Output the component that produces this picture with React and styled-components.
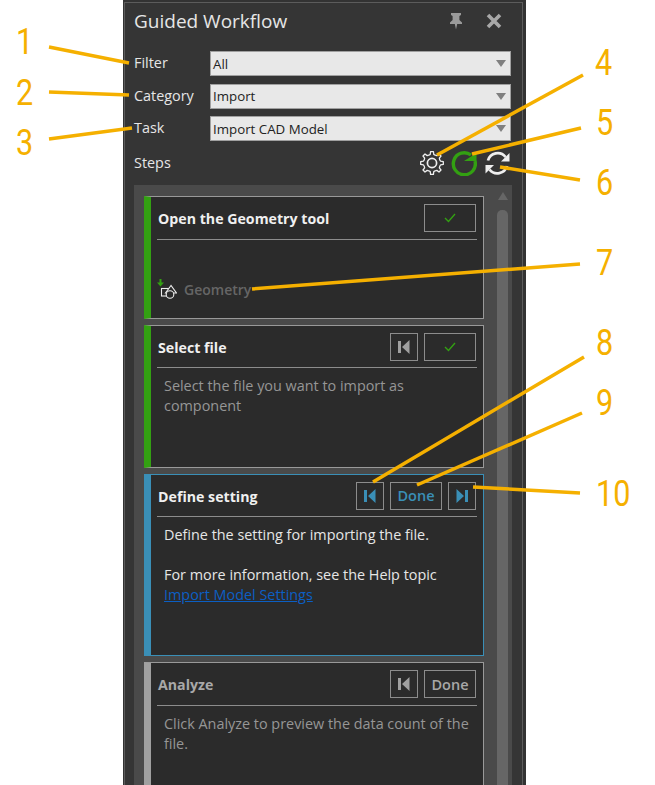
import React from "react"
import styled, { createGlobalStyle } from "styled-components"

const GlobalStyle = createGlobalStyle`
  html, body {
    margin: 0;
    padding: 0;
    background: #fff;
  }
  body {
    font-family: "Open Sans", "Noto Sans", sans-serif;
  }
`

const ORANGE = "#f5b000"
const GREEN = "#33a012"
const BLUE = "#3a8fb7"

const callouts = [
  { n: "1", x: 16, y: 21 },
  { n: "2", x: 16, y: 72 },
  { n: "3", x: 16, y: 122 },
  { n: "4", x: 595, y: 42 },
  { n: "5", x: 596, y: 102 },
  { n: "6", x: 596, y: 162 },
  { n: "7", x: 596, y: 242 },
  { n: "8", x: 596, y: 322 },
  { n: "9", x: 596, y: 382 },
  { n: "10", x: 596, y: 473 },
]

const leaders = [
  [49, 47, 129, 63],
  [49, 92, 129, 95],
  [49, 139, 132, 128],
  [583, 75, 437, 155],
  [581, 128, 472, 154],
  [580, 180, 500, 167],
  [580, 264, 252, 289],
  [584, 357, 373, 482],
  [582, 413, 417, 485],
  [580, 493, 473, 487],
]

const PinIcon = () => (
  <svg width="16" height="18" viewBox="0 0 16 18">
    <path d="M3 1h10v2l-1.6 1v4l2.6 2.6V12H9.2L8 17.500 6.800 12H2v-1.400L4.600 8V4L3 3z" fill="#9a9a9a" />
  </svg>
)

const CloseIcon = () => (
  <svg width="16" height="16" viewBox="0 0 16 16">
    <path d="M2 2l12 12M14 2L2 14" stroke="#a8a8a8" strokeWidth="3.600" />
  </svg>
)

const gearPath = () => {
  const teeth = 8
  const cx = 12
  const cy = 12
  const pts = []
  for (let i = 0; i < teeth; i++) {
    const a = (i / teeth) * Math.PI * 2
    const step = (Math.PI * 2) / teeth
    const p = (r, o) => {
      const x = cx + r * Math.cos(a + o * step)
      const y = cy + r * Math.sin(a + o * step)
      return `${x.toFixed(2)} ${y.toFixed(2)}`
    }
    pts.push(p(8.4, -0.5), p(8.8, -0.26), p(11.4, -0.16), p(11.4, 0.16), p(8.8, 0.26))
  }
  return "M" + pts.join("L") + "Z"
}

const GearIcon = () => (
  <svg width="24" height="24" viewBox="0 0 24 24" fill="none" stroke="#eee" strokeWidth="1.300">
    <path d={gearPath()} strokeLinejoin="round" />
    <circle cx="12" cy="12" r="4.600" strokeWidth="1.700" />
  </svg>
)

const RunIcon = () => (
  <svg width="26" height="26" viewBox="0 0 26 26" fill="none">
    <path d="M20 5A11 11 0 1 0 24 11" stroke={GREEN} strokeWidth="3.400" />
    <path d="M13 11H25.500V3z" fill={GREEN} />
  </svg>
)

const SyncIcon = () => (
  <svg width="27" height="26" viewBox="0 0 27 26" fill="none">
    <path d="M4 10.500A10 10 0 0 1 21.500 7" stroke="#eee" strokeWidth="2.800" />
    <path d="M23 16A10 10 0 0 1 5.500 19.500" stroke="#eee" strokeWidth="2.800" />
    <path d="M25.500 3v8.500H17z" fill="#eee" />
    <path d="M1.500 23.500V15H10z" fill="#eee" />
  </svg>
)

const GeometryIcon = () => (
  <svg width="20" height="20" viewBox="0 0 20 20" fill="none">
    <path d="M2.500 0h2v3.500H7L3.500 7.500 0 3.500h2.500z" fill={GREEN} />
    <rect x="4.500" y="9.500" width="8" height="7.500" stroke="#eee" strokeWidth="1.100" />
    <path d="M14 6.500l-5.500 7.500h11z" fill="#2b2b2b" stroke="#eee" strokeWidth="1.100" />
    <circle cx="13" cy="15.500" r="3.800" fill="#2b2b2b" stroke="#eee" strokeWidth="1.100" />
  </svg>
)

const CheckIcon = () => (
  <svg width="12" height="10" viewBox="0 0 12 10" fill="none">
    <path d="M1 5l3.500 3.500L11 1" stroke={GREEN} strokeWidth="1.400" />
  </svg>
)

const PrevIcon = ({ color }) => (
  <svg width="14" height="14" viewBox="0 0 14 14">
    <path d="M1 1h3v12H1zM12.500 0v14L5 7z" fill={color} />
  </svg>
)

const NextIcon = ({ color }) => (
  <svg width="14" height="14" viewBox="0 0 14 14">
    <path d="M10 1h3v12h-3zM1.500 0v14L9 7z" fill={color} />
  </svg>
)

const Row = ({ label, value }) => (
  <FieldRow>
    <FieldLabel>{label}</FieldLabel>
    <Combo>
      {value}
      <Caret />
    </Combo>
  </FieldRow>
)

export default function App() {
  return (
    <Page>
      <GlobalStyle />
      <Panel>
        <Inner>
          <TitleBar>
            <Title>Guided Workflow</Title>
            <TitleIcons>
              <PinIcon />
              <CloseIcon />
            </TitleIcons>
          </TitleBar>
          <Fields>
            <Row label="Filter" value="All" />
            <Row label="Category" value="Import" />
            <Row label="Task" value="Import CAD Model" />
          </Fields>
          <StepsBar>
            <FieldLabel>Steps</FieldLabel>
            <StepsIcons>
              <GearIcon />
              <RunIcon />
              <SyncIcon />
            </StepsIcons>
          </StepsBar>
          <List>
            <Cards>
              <Card $accent={GREEN} $edge="#999" $height={123}>
                <CardBody>
                  <CardHead $height={43}>
                    <CardTitle>Open the Geometry tool</CardTitle>
                    <Buttons>
                      <WideButton><CheckIcon /></WideButton>
                    </Buttons>
                  </CardHead>
                  <ToolRow>
                    <GeometryIcon />
                    <ToolName>Geometry</ToolName>
                  </ToolRow>
                </CardBody>
              </Card>

              <Card $accent={GREEN} $edge="#999" $height={143}>
                <CardBody>
                  <CardHead $height={42}>
                    <CardTitle>Select file</CardTitle>
                    <Buttons>
                      <SquareButton><PrevIcon color="#a0a0a0" /></SquareButton>
                      <WideButton><CheckIcon /></WideButton>
                    </Buttons>
                  </CardHead>
                  <CardText $dim>Select the file you want to import as component</CardText>
                </CardBody>
              </Card>

              <Card $accent={BLUE} $edge={BLUE} $height={182}>
                <CardBody>
                  <CardHead $height={42}>
                    <CardTitle>Define setting</CardTitle>
                    <Buttons>
                      <SquareButton><PrevIcon color={BLUE} /></SquareButton>
                      <WideButton $color={BLUE}>Done</WideButton>
                      <SquareButton><NextIcon color={BLUE} /></SquareButton>
                    </Buttons>
                  </CardHead>
                  <CardText>
                    Define the setting for importing the file.
                    <br />
                    <br />
                    For more information, see the Help topic
                    <br />
                    <HelpLink href="#">Import Model Settings</HelpLink>
                  </CardText>
                </CardBody>
              </Card>

              <Card $accent="#a0a0a0" $edge="#999" $height={183}>
                <CardBody>
                  <CardHead $height={43}>
                    <CardTitle $dim>Analyze</CardTitle>
                    <Buttons>
                      <SquareButton><PrevIcon color="#a0a0a0" /></SquareButton>
                      <WideButton $color="#a8a8a8">Done</WideButton>
                    </Buttons>
                  </CardHead>
                  <CardText $dim>Click Analyze to preview the data count of the file.</CardText>
                </CardBody>
              </Card>
            </Cards>
            <Scrollbar>
              <ScrollUp />
              <ScrollThumb />
            </Scrollbar>
          </List>
        </Inner>
      </Panel>

      <Leaders width="655" height="785" viewBox="0 0 655 785">
        {leaders.map(([x1, y1, x2, y2]) => (
          <line key={`${x1}-${y1}`} x1={x1} y1={y1} x2={x2} y2={y2} stroke={ORANGE} strokeWidth="3.500" />
        ))}
      </Leaders>
      {callouts.map(c => (
        <Callout key={c.n} $x={c.x} $y={c.y}>{c.n}</Callout>
      ))}
    </Page>
  )
}

const Page = styled.div`
  position: relative;
  width: 655px;
  height: 785px;
  overflow: hidden;
  background: #fff;
`
const Panel = styled.div`
  width: 403px;
  height: 785px;
  margin-left: 123px;
  padding: 2px 3px 0 1px;
  box-sizing: border-box;
  background: #333;
`
const Inner = styled.div`
  height: 100%;
  box-sizing: border-box;
  padding: 0 10px 0 9px;
  background: #353535;
  border: 1px solid #5c5c5c;
  border-bottom: none;
  overflow: hidden;
`
const TitleBar = styled.div`
  height: 36px;
  display: flex;
  align-items: center;
  justify-content: space-between;
`
const Title = styled.div`
  color: #e6e6e6;
  font-size: 19px;
`
const TitleIcons = styled.div`
  display: flex;
  align-items: center;
  gap: 22px;
  margin-right: 10px;
`
const Fields = styled.div`
  margin-top: 12px;
  display: flex;
  flex-direction: column;
  gap: 7.500px;
`
const FieldRow = styled.div`
  display: flex;
  align-items: center;
  height: 25px;
`
const FieldLabel = styled.div`
  width: 76px;
  padding-bottom: 2px;
  color: #e6e6e6;
  font-size: 14.400px;
`
const Combo = styled.div`
  position: relative;
  flex: 1;
  height: 25px;
  box-sizing: border-box;
  padding-left: 2px;
  margin-right: 1px;
  display: flex;
  align-items: center;
  color: #222;
  font-size: 13.300px;
  background: #e8e8e8;
  border: 1px solid #a0a0a0;
`
const Caret = styled.span`
  position: absolute;
  right: 4px;
  top: 8px;
  border-left: 5px solid transparent;
  border-right: 5px solid transparent;
  border-top: 7px solid #808080;
`
const StepsBar = styled.div`
  height: 40px;
  margin-top: 2px;
  display: flex;
  align-items: center;
  justify-content: space-between;
`
const StepsIcons = styled.div`
  display: flex;
  align-items: center;
  gap: 7px;
  margin-right: 1px;
`
const List = styled.div`
  margin-top: 2px;
  width: 378px;
  height: 620px;
  display: flex;
  background: #4a4a4a;
  padding: 11px 0 0 10px;
  box-sizing: border-box;
`
const Cards = styled.div`
  width: 340px;
  display: flex;
  flex-direction: column;
  gap: 6px;
  flex-shrink: 0;
`
const Card = styled.div`
  height: ${p => p.$height}px;
  flex-shrink: 0;
  box-sizing: border-box;
  display: flex;
  background: #2b2b2b;
  border: 1px solid ${p => p.$edge};
  border-left: 7px solid ${p => p.$accent};
`
const CardBody = styled.div`
  flex: 1;
  min-width: 0;
  display: flex;
  flex-direction: column;
  padding: 0 6px;
`
const CardHead = styled.div`
  height: ${p => p.$height}px;
  flex-shrink: 0;
  box-sizing: border-box;
  display: flex;
  align-items: center;
  justify-content: space-between;
  border-bottom: 1px solid #8c8c8c;
`
const CardTitle = styled.div`
  margin: 1px 0 0 1px;
  color: ${p => (p.$dim ? "#a8a8a8" : "#f0f0f0")};
  font-size: 14.200px;
  font-weight: 700;
`
const Buttons = styled.div`
  display: flex;
  gap: 6px;
  margin-right: 1px;
`
const SquareButton = styled.div`
  width: 28px;
  height: 28px;
  box-sizing: border-box;
  display: flex;
  align-items: center;
  justify-content: center;
  border: 1px solid #8c8c8c;
`
const WideButton = styled(SquareButton)`
  width: 52px;
  color: ${p => p.$color || "#a8a8a8"};
  font-size: 14.500px;
  font-weight: 600;
`
const ToolRow = styled.div`
  margin-top: auto;
  margin-bottom: 19px;
  display: flex;
  align-items: center;
  gap: 7px;
`
const ToolName = styled.div`
  color: #666;
  font-size: 14px;
  font-weight: 600;
`
const CardText = styled.div`
  padding: 8px 0 0 7px;
  color: ${p => (p.$dim ? "#969696" : "#e6e6e6")};
  font-size: 14.400px;
  line-height: 20px;
`
const HelpLink = styled.a`
  color: #0b5fc4;
  text-decoration: underline;
`
const Scrollbar = styled.div`
  margin-left: 13px;
  margin-top: -4px;
  width: 11px;
  display: flex;
  flex-direction: column;
  align-items: center;
`
const ScrollUp = styled.span`
  border-left: 5px solid transparent;
  border-right: 5px solid transparent;
  border-bottom: 8px solid #666;
`
const ScrollThumb = styled.div`
  margin-top: 10px;
  width: 11px;
  height: 600px;
  border-radius: 5px 5px 0 0;
  background: #666;
`
const Leaders = styled.svg`
  position: absolute;
  left: 0;
  top: 0;
  pointer-events: none;
`
const Callout = styled.div`
  position: absolute;
  left: ${p => p.$x}px;
  top: ${p => p.$y}px;
  color: ${ORANGE};
  font-family: Roboto, sans-serif;
  font-size: 36px;
  line-height: 42px;
  transform: scaleX(0.85);
  transform-origin: left top;
`
